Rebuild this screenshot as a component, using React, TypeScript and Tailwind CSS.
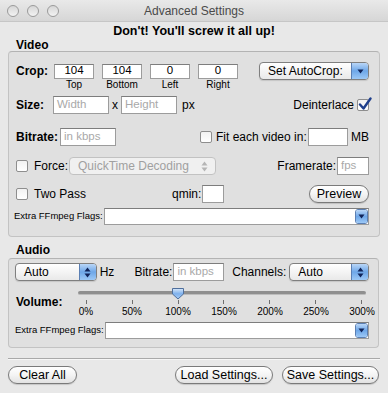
import React from "react";

const font = "font-['Liberation_Sans',Arial,sans-serif]";

function TextField({ w, h = 18, value, placeholder, center }: { w: number; h?: number; value?: string; placeholder?: string; center?: boolean }) {
  return (
    <div
      className={`bg-white border border-[#9c9c9c] border-t-[#7d7d7d] flex items-center px-[3px] text-[11.5px] leading-none ${center ? "justify-center" : ""}`}
      style={{ width: w, height: h }}
    >
      {value ? <span className="text-black">{value}</span> : <span className="text-[#a9a9a9]">{placeholder}</span>}
    </div>
  );
}

function Checkbox({ checked }: { checked?: boolean }) {
  return (
    <div className="relative w-[12px] h-[12px] shrink-0 rounded-[2px] border border-[#8e8e8e] bg-gradient-to-b from-[#f2f2f2] to-white">
      {checked && (
        <svg className="absolute -top-[3px] left-0" width="15" height="15" viewBox="0 0 15 15">
          <path d="M2 7.5 L5.5 11.5 L12.5 1.5" fill="none" stroke="#1f3f8c" strokeWidth="2.4" strokeLinecap="round" strokeLinejoin="round" />
        </svg>
      )}
    </div>
  );
}

function UpDown({ color = "#10245a" }: { color?: string }) {
  return (
    <svg width="7" height="11" viewBox="0 0 7 11">
      <path d="M3.5 0.5 L6.5 4.5 L0.5 4.5 Z" fill={color} />
      <path d="M3.5 10.5 L6.5 6.5 L0.5 6.5 Z" fill={color} />
    </svg>
  );
}

function Down() {
  return (
    <svg width="7" height="5" viewBox="0 0 7 5">
      <path d="M0.5 0.5 L6.5 0.5 L3.5 4.5 Z" fill="#10245a" />
    </svg>
  );
}

function BlueCap({ children, w = 17 }: { children: React.ReactNode; w?: number }) {
  return (
    <div
      className="h-full flex items-center justify-center bg-gradient-to-b from-[#b9d6f7] via-[#6ea7e8] to-[#9cc8f6] border-l border-[#5b7fb3]"
      style={{ width: w }}
    >
      {children}
    </div>
  );
}

function PopUp({ w, label, arrows = "updown" }: { w: number; label: string; arrows?: "updown" | "down" }) {
  return (
    <div
      className="h-[18px] flex items-stretch rounded-[4px] border border-[#7f7f7f] overflow-hidden bg-gradient-to-b from-white to-[#e9e9e9] shadow-[0_1px_1px_rgba(0,0,0,0.12)]"
      style={{ width: w }}
    >
      <div className="flex-1 flex items-center pl-[8px] text-[12px] text-black">{label}</div>
      <BlueCap>{arrows === "updown" ? <UpDown /> : <Down />}</BlueCap>
    </div>
  );
}

function Combo() {
  return (
    <div className="flex-1 h-[17px] flex items-stretch bg-white border border-[#9c9c9c] border-t-[#7d7d7d]">
      <div className="flex-1" />
      <div className="w-[13px] rounded-[3px] overflow-hidden border border-[#5b7fb3] flex">
        <div className="flex-1 flex items-center justify-center bg-gradient-to-b from-[#b9d6f7] via-[#6ea7e8] to-[#9cc8f6]">
          <Down />
        </div>
      </div>
    </div>
  );
}

function Pill({ w, label }: { w: number; label: string }) {
  return (
    <div
      className="h-[18px] rounded-full border border-[#7a7a7a] bg-gradient-to-b from-white via-[#f4f4f4] to-[#e2e2e2] flex items-center justify-center text-[12.5px] text-black shadow-[0_1px_1px_rgba(0,0,0,0.15)]"
      style={{ width: w }}
    >
      {label}
    </div>
  );
}

function Light() {
  return <div className="w-[12px] h-[12px] rounded-full border border-[#9a9a9a] bg-gradient-to-b from-[#d6d6d6] to-[#f3f3f3]" />;
}

const ticks = ["0%", "50%", "100%", "150%", "200%", "250%", "300%"];

export default function App() {
  return (
    <div className={`${font} w-[388px] h-[393px] bg-[#e8e8e8] text-black overflow-hidden flex flex-col`}>
      {/* Title bar */}
      <div className="h-[22px] shrink-0 relative flex items-center bg-gradient-to-b from-[#e9e9e9] to-[#d6d6d6] border-b border-[#c6c6c6]">
        <div className="flex gap-[8px] pl-[7px]">
          <Light />
          <Light />
          <Light />
        </div>
        <div className="absolute inset-0 flex items-center justify-center text-[12px] text-[#4a4a4a]">Advanced Settings</div>
      </div>

      <div className="h-[16px] mt-[1px] leading-[16px] text-center font-bold text-[12.5px]">Don't! You'll screw it all up!</div>
      <div className="h-[12px] leading-[12px] pl-[16px] font-bold text-[12px]">Video</div>

      {/* Video box */}
      <div className="mx-[8px] h-[186px] shrink-0 rounded-[4px] border border-[#c3c3c3] border-t-[#b3b3b3] bg-[#e0e0e0] pl-[7px] pr-[10px] pt-[10px] text-[12px]">
        <div className="h-[18px] flex items-center">
          <span className="w-[38px] font-bold">Crop:</span>
          <div className="flex gap-[8px]">
            <TextField w={40} h={15} value="104" center />
            <TextField w={40} h={15} value="104" center />
            <TextField w={40} h={15} value="0" center />
            <TextField w={40} h={15} value="0" center />
          </div>
          <div className="ml-auto">
            <PopUp w={110} label="Set AutoCrop:" arrows="down" />
          </div>
        </div>
        <div className="h-[10px] flex items-center text-[10px] leading-none">
          <span className="w-[38px]" />
          <div className="flex gap-[8px]">
            {["Top", "Bottom", "Left", "Right"].map((t) => (
              <span key={t} className="w-[40px] text-center">{t}</span>
            ))}
          </div>
        </div>

        <div className="h-[18px] mt-[6px] flex items-center">
          <span className="w-[37px] font-bold">Size:</span>
          <TextField w={56} placeholder="Width" />
          <span className="w-[12px] text-center">x</span>
          <TextField w={56} placeholder="Height" />
          <span className="ml-[5px]">px</span>
          <span className="ml-auto mr-[3px]">Deinterlace</span>
          <Checkbox checked />
        </div>

        <div className="h-[18px] mt-[14px] flex items-center">
          <div className="w-[184px] flex items-center">
            <span className="w-[44px] font-bold">Bitrate:</span>
            <TextField w={56} placeholder="in kbps" />
          </div>
          <Checkbox />
          <span className="ml-[4px]">Fit each video in:</span>
          <div className="ml-auto">
            <TextField w={40} />
          </div>
          <span className="ml-[3px]">MB</span>
        </div>

        <div className="h-[18px] mt-[11px] flex items-center">
          <Checkbox />
          <span className="ml-[6px] w-[35px]">Force:</span>
          <div className="w-[147px] h-[18px] flex items-center rounded-[4px] border border-[#c2c2c2] bg-[#f0f0f0] pl-[8px] pr-[7px] text-[#a0a0a0]">
            <span className="flex-1">QuickTime Decoding</span>
            <UpDown color="#b5b5b5" />
          </div>
          <span className="ml-auto mr-[1px]">Framerate:</span>
          <TextField w={32} placeholder="fps" />
        </div>

        <div className="h-[18px] mt-[10px] flex items-center">
          <Checkbox />
          <span className="ml-[6px]">Two Pass</span>
          <span className="ml-[86px] mr-[1px]">qmin:</span>
          <TextField w={22} />
          <div className="ml-auto">
            <Pill w={60} label="Preview" />
          </div>
        </div>

        <div className="h-[18px] mt-[4px] flex items-center">
          <span className="-ml-[2px] w-[90px] text-[9.5px]">Extra FFmpeg Flags:</span>
          <Combo />
        </div>
      </div>

      <div className="h-[12px] leading-[12px] mt-[7px] pl-[16px] font-bold text-[12px]">Audio</div>

      {/* Audio box */}
      <div className="ml-[8px] mr-[9px] mt-[2px] h-[90px] shrink-0 rounded-[4px] border border-[#c3c3c3] border-t-[#b3b3b3] bg-[#e0e0e0] pl-[6px] pr-[9px] pt-[4px] text-[12px]">
        <div className="h-[18px] flex items-center">
          <PopUp w={82} label="Auto" />
          <span className="ml-[3px]">Hz</span>
          <span className="ml-[20px] mr-[1px]">Bitrate:</span>
          <TextField w={51} placeholder="in kbps" />
          <span className="ml-[8px] mr-[3px]">Channels:</span>
          <PopUp w={80} label="Auto" />
        </div>

        <div className="mt-[6px] h-[32px] flex items-start">
          <span className="w-[63px] mt-[6px] pl-[1px] font-bold">Volume:</span>
          <div className="w-[288px] flex flex-col">
            <div className="relative h-[13px]">
              <div className="absolute left-0 right-0 top-[4px] h-[4px] rounded-full bg-[#8f8f8f] border-b border-[#bdbdbd]" />
              <svg className="absolute top-0 left-[93px]" width="14" height="13" viewBox="0 0 14 13">
                <defs>
                  <linearGradient id="kn" x1="0" y1="0" x2="0" y2="1">
                    <stop offset="0" stopColor="#d9e9fb" />
                    <stop offset="0.5" stopColor="#7fb1ec" />
                    <stop offset="1" stopColor="#a9cdf5" />
                  </linearGradient>
                </defs>
                <path d="M1.5 1.5 H12.5 V7 L7 12 L1.5 7 Z" fill="url(#kn)" stroke="#4f6f9c" strokeWidth="1" strokeLinejoin="round" />
              </svg>
            </div>
            <div className="flex justify-between pl-[8px] pr-[4px] h-[5px]">
              {ticks.map((t) => (
                <div key={t} className="w-[1px] h-[4px] bg-[#6f6f6f]" />
              ))}
            </div>
            <div className="flex justify-between -ml-[6px] -mr-[10px] text-[10px] leading-[12px] mt-[1px]">
              {ticks.map((t) => (
                <span key={t} className="w-[28px] text-center">{t}</span>
              ))}
            </div>
          </div>
        </div>

        <div className="h-[18px] mt-[2px] flex items-center">
          <span className="w-[90px] text-[9.5px]">Extra FFmpeg Flags:</span>
          <Combo />
        </div>
      </div>

      <div className="mx-[8px] mt-[10px] h-[1px] bg-[#a9a9a9] border-b border-[#f6f6f6] box-content" />

      <div className="mt-[6px] px-[8px] flex items-center">
        <Pill w={69} label="Clear All" />
        <div className="ml-auto flex gap-[9px] mr-[1px]">
          <Pill w={98} label="Load Settings..." />
          <Pill w={97} label="Save Settings..." />
        </div>
      </div>
    </div>
  );
}
